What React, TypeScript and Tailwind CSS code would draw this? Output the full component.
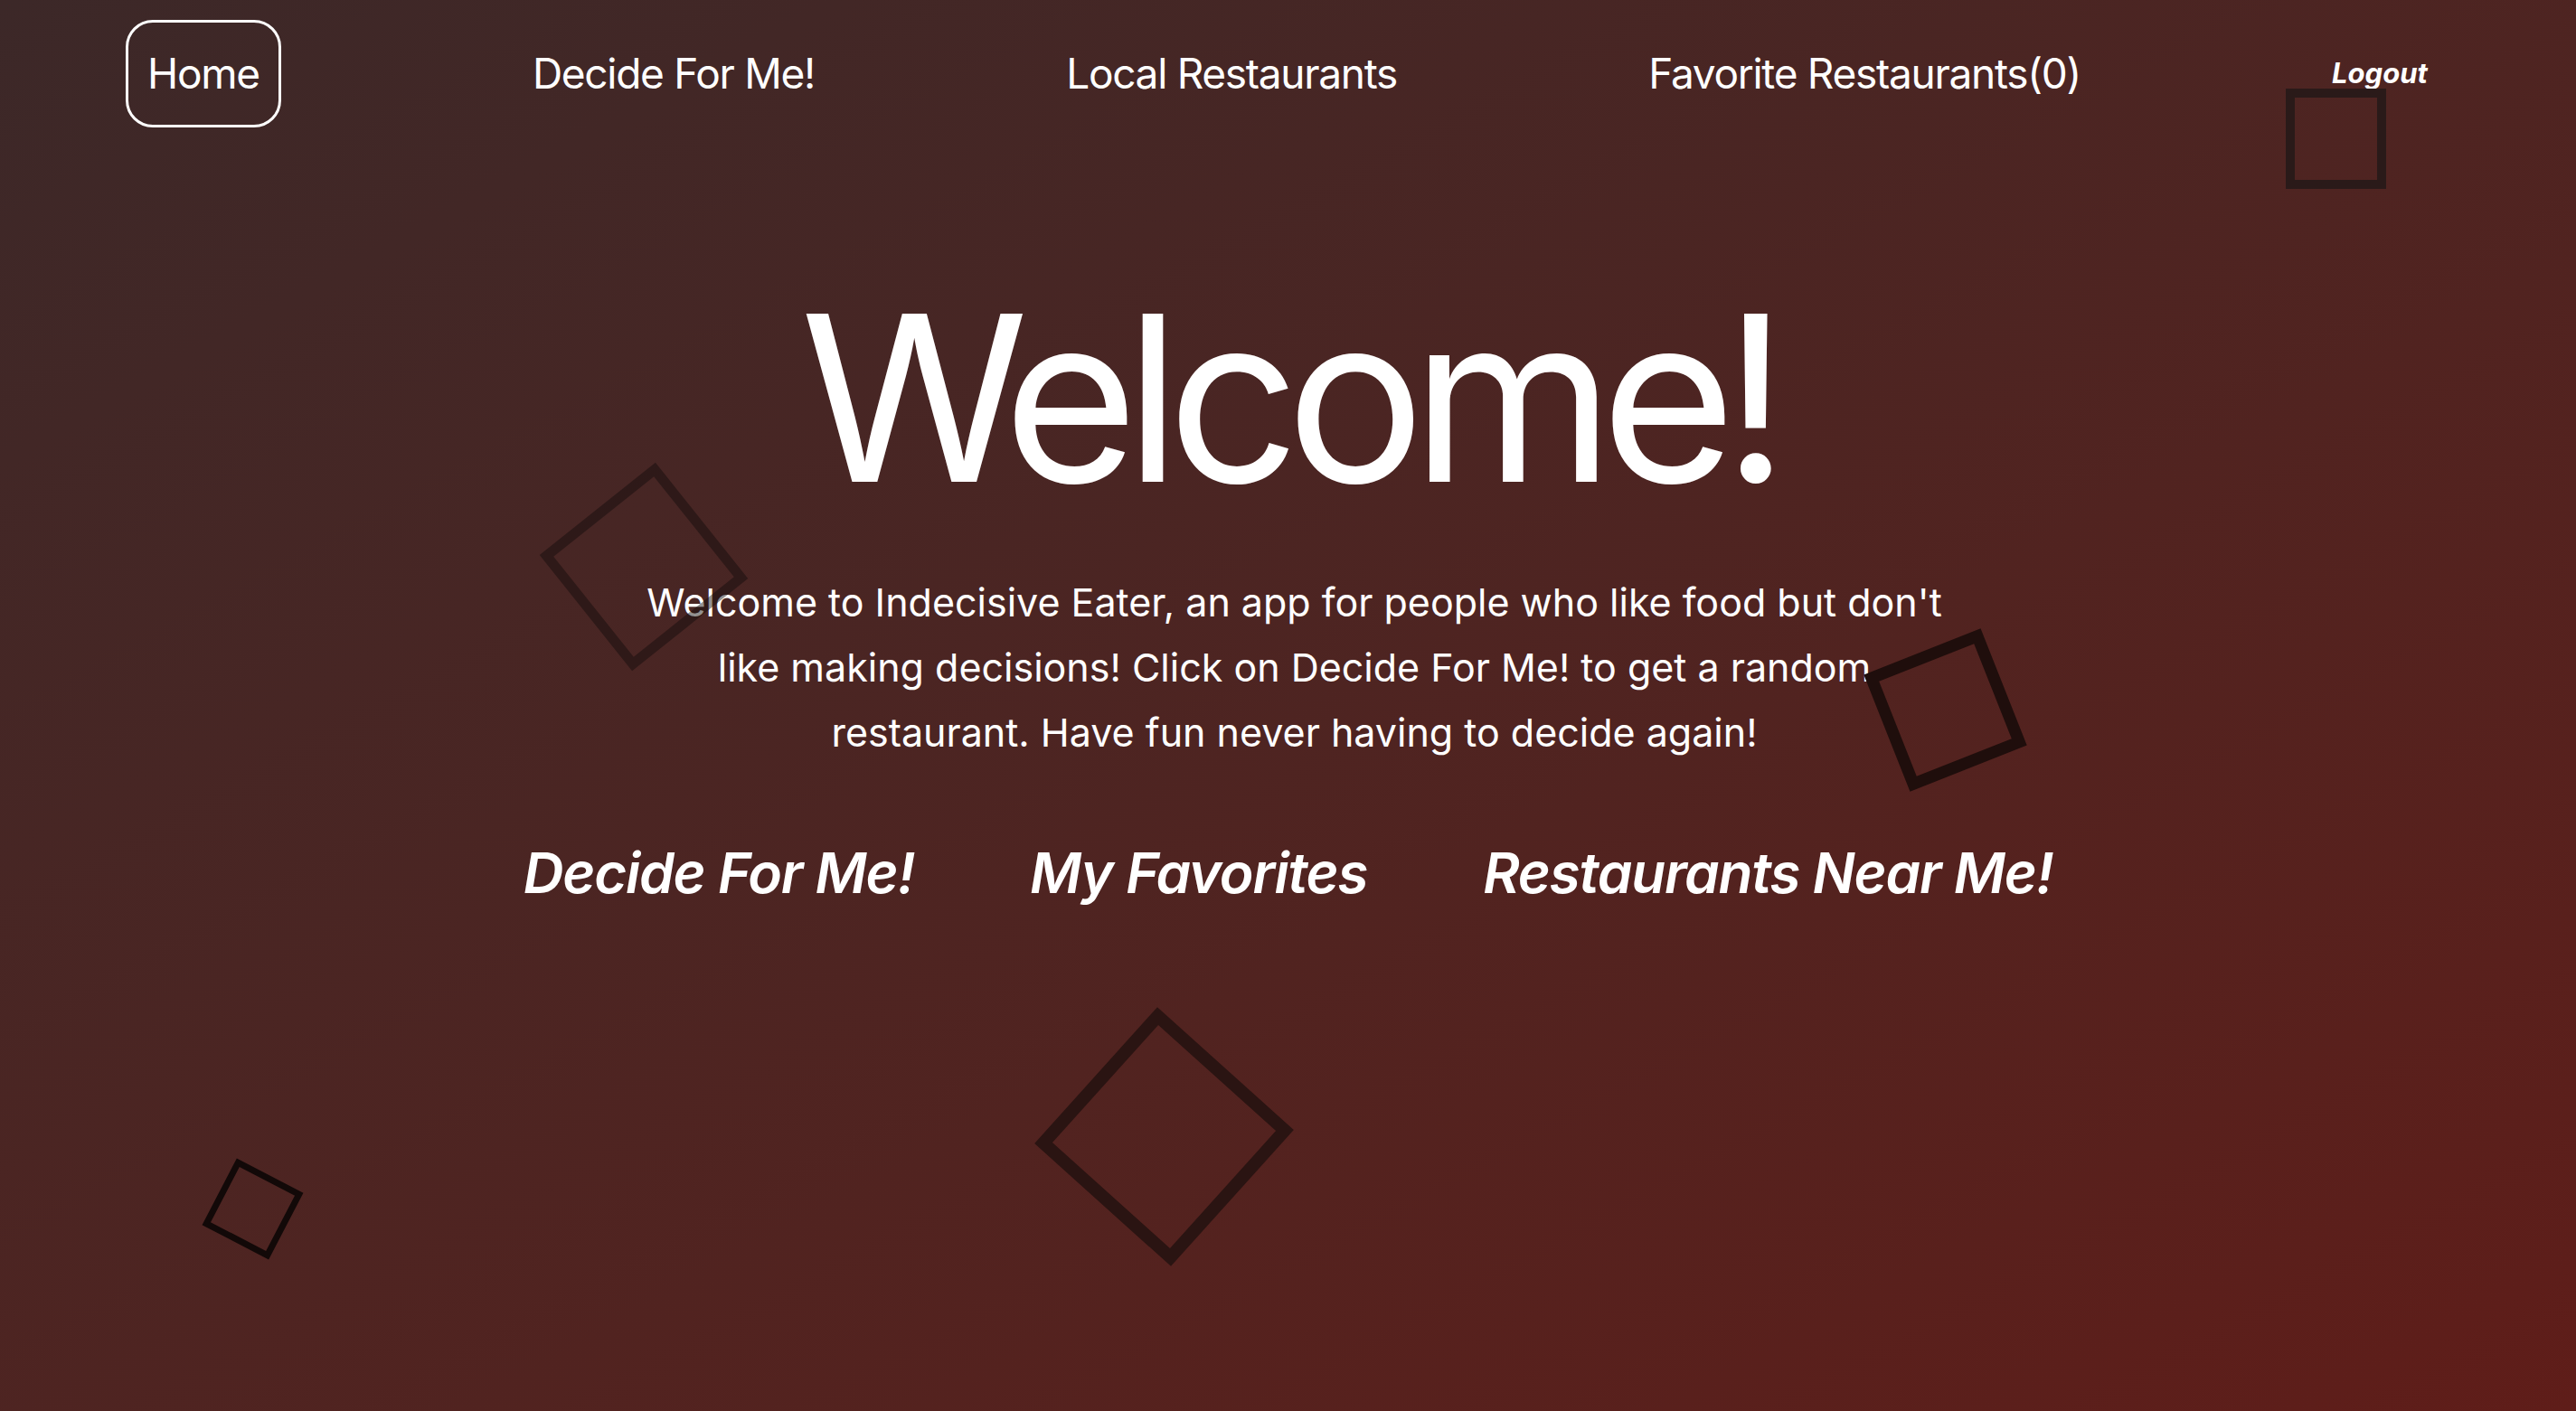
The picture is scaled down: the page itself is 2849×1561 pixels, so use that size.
const navLinks = ["Decide For Me!", "Local Restaurants", "Favorite Restaurants(0)"];

const quickLinks = ["Decide For Me!", "My Favorites", "Restaurants Near Me!"];

export default function App() {
  return (
    <div className="relative h-screen w-full overflow-hidden bg-gradient-to-br from-[#3c2828] to-[#5f1d19] font-['Inter','Liberation_Sans',sans-serif] text-white">
      {/* Nav */}
      <nav className="flex items-center justify-around pr-[25px] pt-[22px]">
        <a className="rounded-[30px] border-[3px] border-white px-[21px] py-[28px] text-[46px] leading-[57px] tracking-[-0.028em]">
          Home
        </a>
        {navLinks.map((l) => (
          <a key={l} className="text-[46px] leading-[57px] tracking-[-0.028em]">
            {l}
          </a>
        ))}
        <button className="text-[31px] font-bold italic">Logout</button>
      </nav>

      {/* Hero */}
      <main className="relative z-0 flex flex-col items-center">
        <h1 className="mt-[171px] text-[256px] leading-none tracking-[-0.058em]">Welcome!</h1>
        <p className="ml-[14px] mt-[62px] max-w-[1460px] text-center text-[43px] leading-[72px]">
          Welcome to Indecisive Eater, an app for people who like food but don't like making decisions! Click on
          Decide For Me! to get a random restaurant. Have fun never having to decide again!
        </p>
        <div className="mt-[73px] flex gap-[128px] text-[62px] font-semibold italic tracking-[-0.02em]">
          {quickLinks.map((l) => (
            <a key={l}>{l}</a>
          ))}
        </div>
      </main>

      {/* floating squares */}
      <div className="absolute left-[2528px] top-[98px] h-[111px] w-[111px] border-[10px] border-[#2a1a19]" />
      <div className="absolute left-[630px] top-[545px] z-10 h-[164px] w-[164px] rotate-[51.4deg] border-[11px] border-[rgba(15,12,12,0.45)]" />
      <div className="absolute left-[2082px] top-[716px] z-10 h-[139px] w-[139px] rotate-[-21.6deg] border-[13px] border-[#1f0e0c]" />
      <div className="absolute left-[1186px] top-[1156px] h-[203px] w-[203px] rotate-[42deg] border-[14px] border-[#2a1412]" />
      <div className="absolute left-[238px] top-[1296px] h-[83px] w-[83px] rotate-[27.5deg] border-[7px] border-[#120908]" />
    </div>
  );
}
